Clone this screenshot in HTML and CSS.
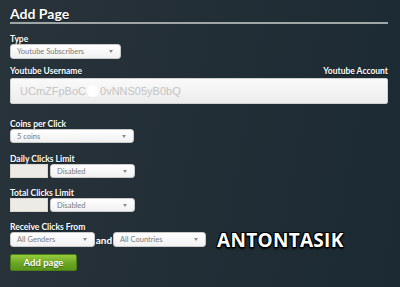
FILE: index.html
```html
<!DOCTYPE html>
<html lang="en">

<head>
    <meta charset="UTF-8">
    <meta name="viewport" content="width=device-width, initial-scale=1.0">
    <title>Add Page</title>
    <link rel="stylesheet" href="styles.css">
</head>

<body>

    <div class="container">
        <h1>Add Page</h1>

        <div class="field fieldType">
            <div class="label">Type</div>
            <div class="select selectType">Youtube Subscribers</div>
        </div>

        <div class="field fieldUser">
            <div class="labelRow">
                <div class="label">Youtube Username</div>
                <div class="label">Youtube Account</div>
            </div>
            <div class="textInput">UCmZFpBoC<span class="blur"></span>0vNNS05yB0bQ</div>
        </div>

        <div class="field fieldCoins">
            <div class="label">Coins per Click</div>
            <div class="select selectCoins">5 coins</div>
        </div>

        <div class="field fieldDaily">
            <div class="label">Daily Clicks Limit</div>
            <div class="row">
                <div class="limitBox"></div>
                <div class="select selectLimit">Disabled</div>
            </div>
        </div>

        <div class="field fieldTotal">
            <div class="label">Total Clicks Limit</div>
            <div class="row">
                <div class="limitBox"></div>
                <div class="select selectLimit">Disabled</div>
            </div>
        </div>

        <div class="field fieldReceive">
            <div class="label">Receive Clicks From</div>
            <div class="row">
                <div class="select selectGender">All Genders</div>
                <span class="and">and</span>
                <div class="select selectCountry">All Countries</div>
                <span class="watermark">ANTONTASIK</span>
            </div>
        </div>

        <button class="button buttonAdd">Add page</button>
    </div>

</body>

</html>
```

FILE: styles.css
```css
body {
    margin: 0;
    width: 400px;
    height: 287px;
    overflow: hidden;
    background: linear-gradient(100deg, #28333a 0%, #222e36 50%, #1b2a33 100%);
    font-family: 'Lato', 'Open Sans', sans-serif;
    color: #ffffff;
}

.container {
    padding: 6px 12px 0 10px;
}

.container h1 {
    margin: 0;
    font-size: 14px;
    font-weight: 700;
    line-height: 16px;
    border-bottom: 2px solid #9ea6a6;
    text-shadow: 0 1px 1px rgba(0, 0, 0, 0.6);
}

.label {
    font-size: 8.5px;
    font-weight: 700;
    line-height: 10px;
    text-shadow: 0 1px 1px rgba(0, 0, 0, 0.5);
}

.labelRow {
    display: flex;
    justify-content: space-between;
}

.row {
    display: flex;
    align-items: center;
}

.fieldType {
    margin-top: 10px;
}

.fieldUser {
    margin-top: 7px;
}

.fieldCoins {
    margin-top: 15px;
}

.fieldDaily {
    margin-top: 11px;
}

.fieldTotal {
    margin-top: 10px;
}

.fieldReceive {
    margin-top: 10px;
}

.select {
    position: relative;
    box-sizing: border-box;
    height: 15px;
    padding-left: 6px;
    background: linear-gradient(#ffffff, #f1f1f1);
    border: 1px solid #c9c9c9;
    border-radius: 3px;
    color: #7a7a7a;
    font-size: 7.5px;
    line-height: 13px;
}

.select::after {
    content: '';
    position: absolute;
    right: 7px;
    top: 5px;
    border-left: 2px solid transparent;
    border-right: 2px solid transparent;
    border-top: 3px solid #8a8a8a;
}

.selectType {
    width: 111px;
}

.selectCoins {
    width: 124px;
    height: 14px;
}

.selectLimit {
    width: 85px;
    height: 14px;
    margin-left: 2px;
}

.selectGender {
    width: 85px;
}

.selectCountry {
    width: 93px;
}

.textInput {
    box-sizing: border-box;
    height: 26px;
    margin-top: 2px;
    padding-left: 9px;
    background: linear-gradient(#fafafa, #ececec);
    border: 1px solid #d0d0d0;
    border-radius: 2px;
    color: #c4c4c4;
    font-family: 'Liberation Sans', Arial, sans-serif;
    font-size: 11px;
    line-height: 24px;
}

.blur {
    display: inline-block;
    width: 12px;
    height: 12px;
    margin: 0 1px -2px;
    border-radius: 50%;
    background: #ffffff;
}

.limitBox {
    box-sizing: border-box;
    width: 38px;
    height: 14px;
    background: #ecebe5;
    border: 1px solid #d6d5cf;
}

.and {
    width: 18px;
    text-align: center;
    font-size: 10px;
    font-weight: 700;
}

.watermark {
    margin-left: 11px;
    font-family: 'Open Sans', sans-serif;
    font-size: 19px;
    font-weight: 700;
    letter-spacing: 0.3px;
    line-height: 14px;
    text-shadow: 1px 1px 0 #000, -1px -1px 0 #000, 1px -1px 0 #000, -1px 1px 0 #000, 0 2px 2px #000;
}

.button {
    font-family: 'Lato', 'Open Sans', sans-serif;
    cursor: pointer;
}

.buttonAdd {
    display: block;
    width: 67px;
    height: 17px;
    margin-top: 7px;
    padding: 0;
    background: linear-gradient(#98cb3e, #6aa623 55%, #5a961a);
    border: 1px solid #4b7e17;
    border-radius: 2px;
    color: #ffffff;
    font-size: 9.5px;
    font-weight: 700;
    text-shadow: 0 1px 1px rgba(0, 0, 0, 0.4);
}
```
